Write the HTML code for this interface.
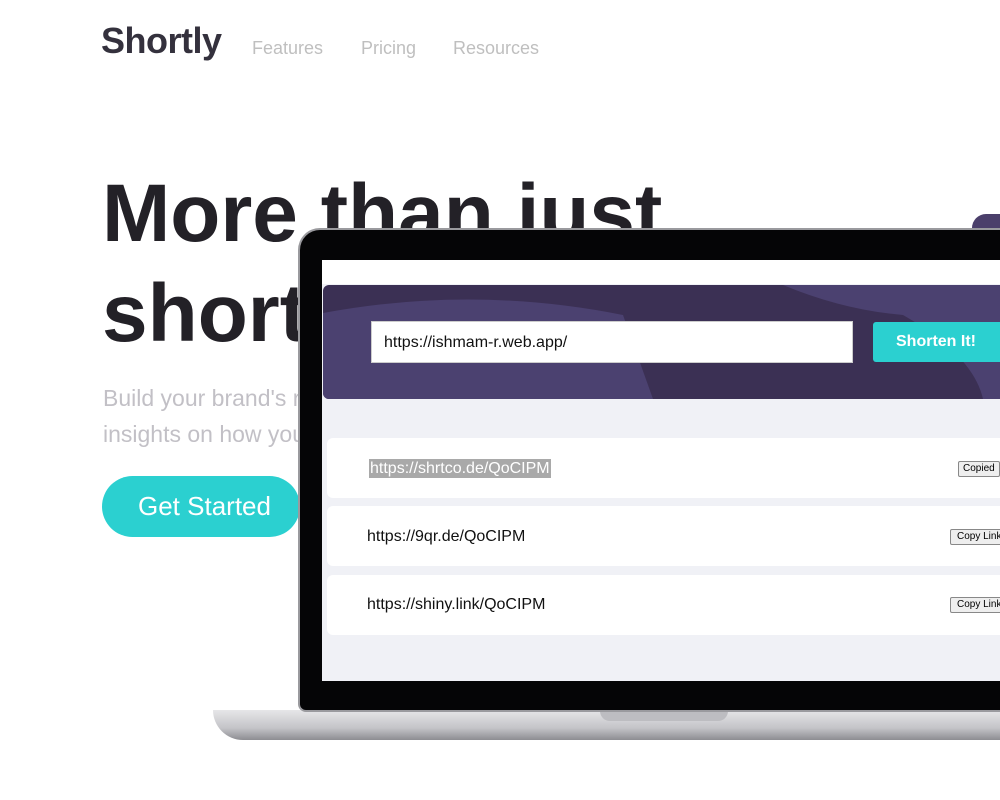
<!DOCTYPE html>
<html><head><style>
body{margin:0;width:1000px;height:800px;overflow:hidden;background:#fff;font-family:"Liberation Sans",sans-serif;position:relative}
.a{position:absolute}
.btn{white-space:nowrap}
</style></head><body>
<div class="a" style="left:101px;top:20px;font-size:36px;font-weight:bold;color:#34313d;letter-spacing:-0.5px">Shortly</div>
<div class="a" style="left:252px;top:38px;font-size:18px;color:#bfbfbf">Features</div>
<div class="a" style="left:361px;top:38px;font-size:18px;color:#bfbfbf">Pricing</div>
<div class="a" style="left:453px;top:38px;font-size:18px;color:#bfbfbf">Resources</div>
<div class="a" style="left:102px;top:164px;font-size:82px;font-weight:bold;color:#232127;line-height:100px;white-space:nowrap">More than just<br>shortening links</div>
<div class="a" style="left:103px;top:380px;font-size:23px;color:#c2c0c6;line-height:36px;white-space:nowrap">Build your brand's recognition and get detailed<br>insights on how your links are performing.</div>
<div class="a" style="left:102px;top:476px;width:198px;height:61px;border-radius:31px;background:#2bd0d0;color:#fff;font-size:26px;line-height:61px;text-indent:36px;white-space:nowrap">Get Started</div>
<div class="a" style="left:972px;top:214px;width:60px;height:30px;border-radius:14px;background:#4b3f6b"></div>
<div class="a" style="left:213px;top:710px;width:800px;height:30px;background:linear-gradient(#e6e6e8,#c4c4c8 60%,#8d8d92);border-radius:0 0 0 40px"></div>
<div class="a" style="left:600px;top:710px;width:128px;height:11px;background:#bdbdc1;border-radius:0 0 10px 10px"></div>
<div class="a" style="left:298px;top:228px;width:720px;height:484px;background:#050506;border-radius:22px 0 0 8px;border:2px solid #9a9a9e;border-right:none;box-sizing:border-box"></div>
<div class="a" style="left:322px;top:260px;width:680px;height:421px;background:#f0f1f6;overflow:hidden">
 <div class="a" style="left:0;top:0;width:680px;height:24px;background:#fff"></div>
 <div class="a" style="left:1px;top:25px;width:680px;height:114px;background:#3b3054;border-radius:6px 0 0 6px;overflow:hidden">
  <svg class="a" style="left:0;top:0" width="680" height="114"><path d="M0 28 Q150 0 300 30 L330 114 H0Z" fill="#4b4170"/><path d="M460 0 Q520 25 580 30 Q650 70 660 114 H700 V0Z" fill="#4b4170"/></svg>
  <div class="a" style="left:48px;top:36px;width:482px;height:42px;background:#fff;border:1px solid #ccc;box-sizing:border-box;font-size:16px;line-height:42px;padding-left:12px;color:#111">https://ishmam-r.web.app/</div>
  <div class="a btn" style="left:550px;top:37px;width:140px;height:40px;background:#2bd0d0;border-radius:3px;color:#fff;font-weight:bold;font-size:16px;line-height:40px;text-indent:23px">Shorten It!</div>
 </div>
 <div class="a" style="left:5px;top:178px;width:700px;height:60px;background:#fff;border-radius:6px"></div>
 <div class="a btn" style="left:47px;top:199px;height:19px;background:#a9a9a9;color:#fff;font-size:16px;line-height:19px;padding:0 1px">https://shrtco.de/QoCIPM</div>
 <div class="a btn" style="left:636px;top:201px;padding:0 4px;height:14px;font-size:10px;line-height:14px;border:1px solid #888;background:#eee;border-radius:2px">Copied</div>
 <div class="a" style="left:5px;top:246px;width:700px;height:60px;background:#fff;border-radius:6px"></div>
 <div class="a btn" style="left:45px;top:268px;font-size:16px;color:#111">https://9qr.de/QoCIPM</div>
 <div class="a btn" style="left:628px;top:269px;padding:0 6px;height:14px;font-size:10px;line-height:14px;border:1px solid #888;background:#eee;border-radius:2px">Copy Link</div>
 <div class="a" style="left:5px;top:315px;width:700px;height:60px;background:#fff;border-radius:6px"></div>
 <div class="a btn" style="left:45px;top:336px;font-size:16px;color:#111">https://shiny.link/QoCIPM</div>
 <div class="a btn" style="left:628px;top:337px;padding:0 6px;height:14px;font-size:10px;line-height:14px;border:1px solid #888;background:#eee;border-radius:2px">Copy Link</div>
</div>
</body></html>
